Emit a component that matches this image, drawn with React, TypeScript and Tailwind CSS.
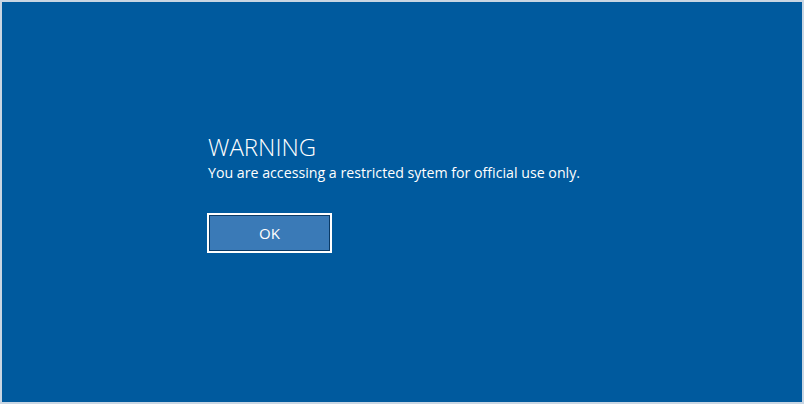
import React from "react";

export default function App() {
  return (
    <div className="w-[804px] h-[404px] bg-[#c9d6e3] p-[2px]" style={{ fontFamily: '"Open Sans", "Noto Sans", sans-serif' }}>
      <div className="w-full h-full bg-[#005a9e] flex flex-col pl-[206px] pt-[129px] text-white">
        <div className="text-[24px] font-light leading-[32px] tracking-[0px]">WARNING</div>
        <div className="text-[14.2px] leading-[20px] mt-[0px]">You are accessing a restricted sytem for official use only.</div>
        <button className="mt-[30px] ml-[-1px] w-[125px] h-[40px] border-2 border-white bg-[#0a3a66] p-[1px]">
          <div className="w-full h-full bg-[#3a7ab7] flex items-center justify-center text-[15px]">OK</div>
        </button>
      </div>
    </div>
  );
}
